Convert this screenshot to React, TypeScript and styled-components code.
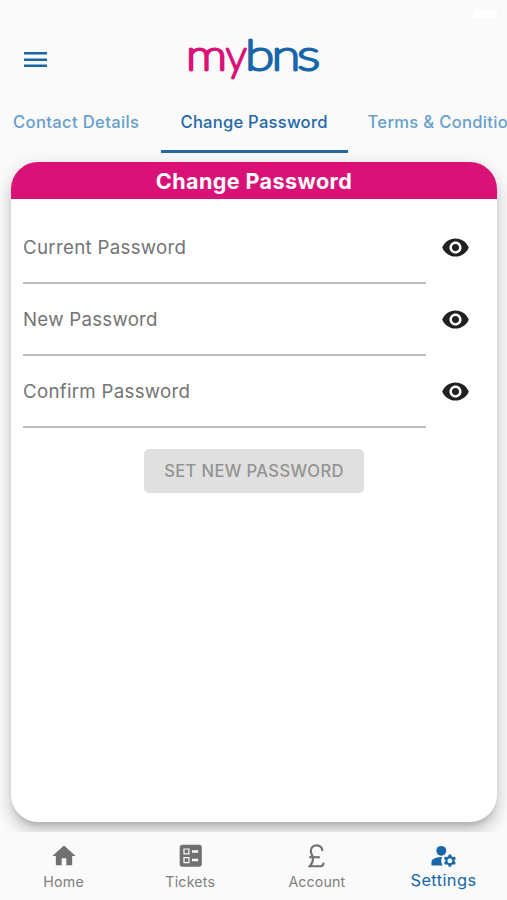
import React from "react";
import styled, { createGlobalStyle } from "styled-components";
import { MdBallot, MdHome, MdManageAccounts, MdVisibility } from "react-icons/md";

const blue = "#1866a9";
const pink = "#da1278";

const GlobalStyle = createGlobalStyle`
  *, *::before, *::after { box-sizing: border-box; }
  body { margin: 0; background: #fafafa; font-family: Inter, "Liberation Sans", sans-serif; }
  button { font: inherit; border: 0; background: none; padding: 0; }
  svg { display: block; flex: none; }
`;

const Screen = styled.div`
  width: 507px;
  height: 900px;
  display: flex;
  flex-direction: column;
  overflow: hidden;
  background: #fafafa;
`;

const StatusBar = styled.div`
  height: 28px;
  padding: 9px 10px 0;
  display: flex;
  justify-content: flex-end;
`;

const Battery = styled.span`
  width: 24px;
  height: 9px;
  border-radius: 3px;
  background: #fff;
`;

const Header = styled.header`
  height: 64px;
  padding-left: 24px;
  display: grid;
  grid-template-columns: 160px 140px;
  align-items: start;
`;

const MenuButton = styled.button`
  width: 23px;
  height: 16px;
  margin-top: 24px;
  color: ${blue};
`;

const Logo = styled.svg`
  width: 140px;
  height: 60px;
  overflow: visible;
  font-family: Lato, sans-serif;
  font-size: 41px;
  font-weight: 100;
  stroke-width: 2.9;
  stroke-linejoin: round;
`;

const Tabs = styled.nav`
  height: 61px;
  display: flex;
  flex: none;
  margin-left: -7px;
  width: 620px;
`;

const Tab = styled.button<{ $active?: boolean; $width: number; $spacing: number }>`
  flex: none;
  width: ${(p) => p.$width}px;
  padding: 1px 0 0 20px;
  text-align: left;
  white-space: nowrap;
  font-size: 16.6px;
  font-weight: 500;
  letter-spacing: ${(p) => p.$spacing}px;
  color: ${(p) => (p.$active ? "#2369a8" : "#689fcb")};
  border-bottom: ${(p) => (p.$active ? `3px solid #2369a8` : "3px solid transparent")};
`;

const Content = styled.main`
  flex: 1;
  min-height: 0;
  overflow: hidden;
  padding: 9px 10px 10px 11px;
`;

const Card = styled.section`
  height: 660px;
  border-radius: 27px;
  overflow: hidden;
  background: #fff;
  box-shadow: 0 6px 7px -4px rgba(0, 0, 0, 0.2), 0 10px 14px 1px rgba(0, 0, 0, 0.12),
    0 4px 18px 3px rgba(0, 0, 0, 0.08);
`;

const CardTitle = styled.h1`
  margin: 0;
  height: 36.5px;
  line-height: 38px;
  text-align: center;
  background: ${pink};
  color: #fff;
  font-size: 21.6px;
  font-weight: 700;
  letter-spacing: 0.38px;
`;

const Form = styled.form`
  padding: 13.5px 12px 0;
  display: flex;
  flex-direction: column;
`;

const FieldRow = styled.div`
  height: 72px;
  display: flex;
`;

const Field = styled.label<{ $spacing: number }>`
  width: 403px;
  border-bottom: 2px solid #bcbcbc;
  line-height: 71px;
  font-size: 18.7px;
  letter-spacing: ${(p) => p.$spacing}px;
  color: #747474;
`;

const Reveal = styled.button`
  width: 59px;
  height: 70px;
  display: grid;
  place-items: center;
  color: #212121;
`;

const Submit = styled.button`
  align-self: center;
  width: 220px;
  height: 44px;
  margin: 21px 0 0 0;
  border-radius: 5px;
  background: #e0e0e0;
  color: #939393;
  font-size: 16.6px;
  font-weight: 500;
  letter-spacing: 0.35px;
`;

const BottomNav = styled.nav`
  height: 68px;
  flex: none;
  display: grid;
  grid-template-columns: repeat(4, 126.6px);
  padding-left: 0.4px;
  background: #fafafa;
`;

const NavItem = styled.button<{ $active?: boolean }>`
  display: grid;
  grid-template-rows: 35px 28px;
  justify-items: center;
  align-content: start;
  padding-top: 6px;
  color: ${(p) => (p.$active ? blue : "#717171")};
`;

const IconSlot = styled.span`
  height: 35px;
  display: grid;
  place-items: center;
`;

const NavLabel = styled.span<{ $active?: boolean; $spacing: number }>`
  font-size: ${(p) => (p.$active ? 16.4 : 14.2)}px;
  line-height: ${(p) => (p.$active ? 15 : 17)}px;
  letter-spacing: ${(p) => p.$spacing}px;
  color: ${(p) => (p.$active ? blue : "#7e7e7e")};
`;

const PoundIcon = () => (
  <svg width="18" height="24" viewBox="0 0 18 24" fill="none" stroke="currentColor" strokeWidth="2.1">
    <path d="M14.4 7C14.1 3.6 11.8 1.4 8.6 1.4C5 1.4 2.8 4 2.8 7C2.8 9.3 4.1 10.6 4.7 13C5.4 16.3 4.4 19.5 1.8 22.2H12.6C14.6 22.2 15.4 21.2 15.6 18.6" />
    <path d="M1.2 13.2H11.8" />
  </svg>
);

const fields = [
  { label: "Current Password", spacing: 0.3 },
  { label: "New Password", spacing: 0.26 },
  { label: "Confirm Password", spacing: 0.28 },
];

export default function App() {
  return (
    <>
      <GlobalStyle />
      <Screen>
        <StatusBar>
          <Battery />
        </StatusBar>
        <Header>
          <MenuButton aria-label="Menu">
            <svg width="23" height="16" viewBox="0 0 23 16" fill="currentColor">
              <path d="M0 0h23v2.6H0zM0 6.4h23V9H0zM0 12.4h23V15H0z" />
            </svg>
          </MenuButton>
          <Logo viewBox="184 28 140 60" role="img" aria-label="mybns">
            <g fill={pink} stroke={pink}>
              <text x="186" y="69.5" textLength="41" lengthAdjust="spacingAndGlyphs">m</text>
              <text x="226" y="69.5" textLength="20.5" lengthAdjust="spacingAndGlyphs">y</text>
            </g>
            <g fill={blue} stroke={blue}>
              <text x="245.3" y="69.5" textLength="28.8" lengthAdjust="spacingAndGlyphs">b</text>
              <text x="271.8" y="69.5" textLength="28.5" lengthAdjust="spacingAndGlyphs">n</text>
              <text x="297.2" y="69.5" textLength="22.8" lengthAdjust="spacingAndGlyphs">s</text>
            </g>
          </Logo>
        </Header>
        <Tabs>
          <Tab $width={167.5} $spacing={0.35}>Contact Details</Tab>
          <Tab $width={187} $spacing={0.23} $active>Change Password</Tab>
          <Tab $width={230} $spacing={0.3}>Terms &amp; Conditions</Tab>
        </Tabs>
        <Content>
          <Card>
            <CardTitle>Change Password</CardTitle>
            <Form>
              {fields.map((f) => (
                <FieldRow key={f.label}>
                  <Field $spacing={f.spacing}>{f.label}</Field>
                  <Reveal type="button" aria-label={`Show ${f.label}`}>
                    <MdVisibility size={29} />
                  </Reveal>
                </FieldRow>
              ))}
              <Submit type="button">SET NEW PASSWORD</Submit>
            </Form>
          </Card>
        </Content>
        <BottomNav>
          <NavItem>
            <IconSlot><MdHome size={28} /></IconSlot>
            <NavLabel $spacing={0.3}>Home</NavLabel>
          </NavItem>
          <NavItem>
            <IconSlot><MdBallot size={29.5} /></IconSlot>
            <NavLabel $spacing={0.2}>Tickets</NavLabel>
          </NavItem>
          <NavItem>
            <IconSlot><PoundIcon /></IconSlot>
            <NavLabel $spacing={0.15}>Account</NavLabel>
          </NavItem>
          <NavItem $active>
            <IconSlot><MdManageAccounts size={29.5} /></IconSlot>
            <NavLabel $active $spacing={0.4}>Settings</NavLabel>
          </NavItem>
        </BottomNav>
      </Screen>
    </>
  );
}
